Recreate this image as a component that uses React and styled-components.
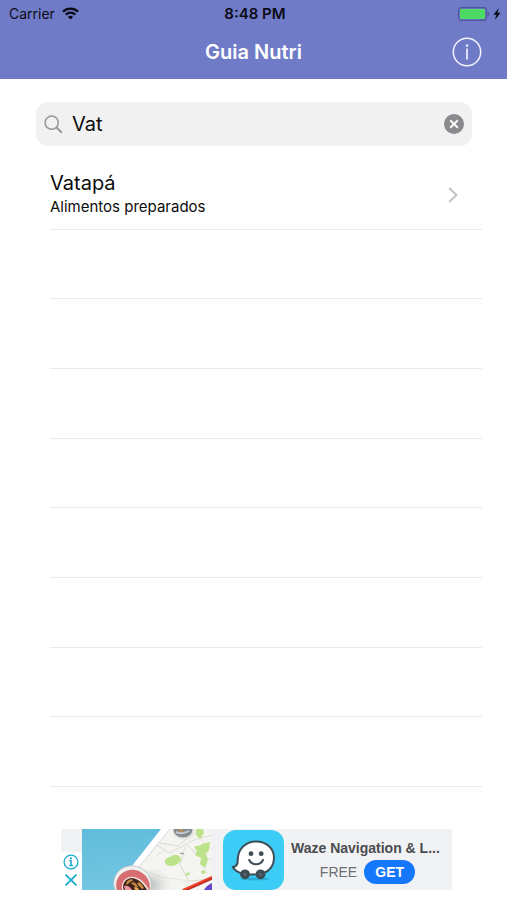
import React, { useState } from 'react';
import styled, { createGlobalStyle, ThemeProvider } from 'styled-components';

const theme = {
  colors: {
    primary: '#707bc8',
    field: '#f1f1f2',
    line: '#ebebec',
    text: '#0c0c0c',
    ad: '#f1f2f4',
    adAction: '#1577fb',
    adChoices: '#16a9c9',
  },
  fonts: {
    system: '"Inter", "Liberation Sans", sans-serif',
    ad: '"Liberation Sans", sans-serif',
  },
};

const GlobalStyle = createGlobalStyle`
  * {
    box-sizing: border-box;
  }

  body {
    margin: 0;
    background: #fff;
    font-family: ${theme.fonts.system};
    color: ${theme.colors.text};
  }

  button {
    padding: 0;
    border: none;
    background: none;
    font-family: inherit;
    cursor: pointer;
  }

  svg {
    display: block;
  }
`;

const Page = styled.div`
  display: flex;
  flex-direction: column;
  min-height: 100vh;
`;

const Header = styled.header`
  background: ${props => props.theme.colors.primary};
`;

const StatusBar = styled.div`
  display: grid;
  grid-template-columns: 1fr auto 1fr;
  align-items: center;
  height: 27px;
  padding: 0 6px 0 9px;
  font-size: 14px;
  line-height: 20px;
  color: #0b0b16;
`;

const StatusGroup = styled.div`
  display: flex;
  align-items: center;
  justify-content: ${props => (props.$end ? 'flex-end' : 'flex-start')};
  gap: ${props => (props.$end ? '3px' : '7px')};
`;

const Clock = styled.time`
  font-size: 15px;
  font-weight: 600;
`;

const NavBar = styled.div`
  display: grid;
  grid-template-columns: 1fr auto 1fr;
  align-items: center;
  height: 52px;
  padding: 0 25px 2px;
`;

const NavTitle = styled.h1`
  grid-column: 2;
  margin: 0;
  font-size: 20px;
  line-height: 24px;
  font-weight: 600;
  color: #fff;
`;

const InfoButton = styled.button`
  justify-self: end;
`;

const SearchForm = styled.form`
  display: flex;
  align-items: center;
  gap: 9px;
  height: 44px;
  margin: 23px 35px 14px 36px;
  padding: 0 8px;
  border-radius: 12px;
  background: ${props => props.theme.colors.field};
`;

const SearchLabel = styled.label`
  flex: none;
`;

const SearchInput = styled.input`
  flex: 1;
  min-width: 0;
  padding: 0;
  border: none;
  outline: none;
  background: transparent;
  font-family: inherit;
  font-size: 20px;
  line-height: 24px;
  color: inherit;
`;

const FoodList = styled.ul`
  display: grid;
  grid-auto-rows: 1fr;
  min-height: 627px;
  margin: 0 25px 0 50px;
  padding: 0;
  list-style: none;
`;

const FoodItem = styled.li`
  border-bottom: 1px solid ${props => props.theme.colors.line};
`;

const FoodButton = styled.button`
  display: flex;
  align-items: center;
  justify-content: space-between;
  width: 100%;
  height: 100%;
  padding: 2px 24px 0 0;
  color: inherit;
  text-align: left;
`;

const FoodText = styled.span`
  display: flex;
  flex-direction: column;
`;

const FoodName = styled.span`
  font-size: 20px;
  line-height: 24px;
`;

const FoodGroup = styled.span`
  font-size: 15px;
  line-height: 24px;
`;

const AdBanner = styled.aside`
  display: flex;
  height: 61px;
  margin: 42px 55px 10px 61px;
  background: ${props => props.theme.colors.ad};
  font-family: ${props => props.theme.fonts.ad};
`;

const AdChoices = styled.div`
  display: flex;
  flex-direction: column;
  flex: none;
  align-items: center;
  justify-content: flex-end;
  gap: 3px;
  width: 21px;
  padding: 0 2px 3px 0;
  border-top: 23px solid ${props => props.theme.colors.ad};
  background: #fff;
`;

const AdPicture = styled.div`
  flex: none;
  margin-right: 11px;
`;

const AdContent = styled.div`
  flex: 1;
  min-width: 0;
  padding: 7px 8px 0 7px;
`;

const AdTitle = styled.div`
  font-size: 14px;
  line-height: 24px;
  font-weight: 700;
  color: #4a4b4e;
  white-space: nowrap;
`;

const AdFooter = styled.div`
  display: flex;
  align-items: center;
  justify-content: center;
  gap: 7px;
`;

const AdPrice = styled.span`
  font-size: 14px;
  line-height: 24px;
  color: #6d6e71;
`;

const AdButton = styled.button`
  width: 51px;
  height: 24px;
  border-radius: 12px;
  background: ${props => props.theme.colors.adAction};
  font-size: 14px;
  line-height: 24px;
  font-weight: 700;
  color: #fff;
`;

const WifiIcon = () => (
  <svg width="17" height="13" viewBox="0 0 17 13" fill="none" stroke="#0b0b16" strokeWidth="2.3" aria-hidden="true">
    <path d="M1 4.6a10.7 10.7 0 0 1 15 0" />
    <path d="M3.8 7.6a6.7 6.7 0 0 1 9.4 0" />
    <path d="M8.5 12.6 5.9 10a3.7 3.7 0 0 1 5.2 0z" fill="#0b0b16" stroke="none" />
  </svg>
);

const BatteryIcon = () => (
  <svg width="32" height="14" viewBox="0 0 32 14" aria-hidden="true">
    <rect x="0.7" y="0.7" width="27.6" height="12.6" rx="2.5" fill="none" stroke="#4c5697" strokeWidth="1.2" />
    <rect x="2" y="2" width="25" height="10" rx="1" fill="#4cd964" />
    <path d="M29.6 4.7c2 .6 2 4 0 4.6z" fill="#4c5697" />
  </svg>
);

const BoltIcon = () => (
  <svg width="8" height="12" viewBox="0 0 8 12" fill="#0b0b16" aria-hidden="true">
    <path d="M5.8 0 0.4 6.7h3L1.8 12l5.8-7.2H4.5z" />
  </svg>
);

const InfoIcon = () => (
  <svg width="30" height="30" viewBox="0 0 30 30" fill="none" stroke="#f2f3ff" aria-hidden="true">
    <circle cx="15" cy="15" r="13.7" strokeWidth="1.5" />
    <path d="M15 11.5v11" strokeWidth="1.7" />
    <circle cx="15" cy="8.5" r="1.2" fill="#f2f3ff" stroke="none" />
  </svg>
);

const SearchIcon = () => (
  <svg width="19" height="19" viewBox="0 0 19 19" fill="none" stroke="#98989c" aria-hidden="true">
    <circle cx="7.7" cy="7.7" r="6.6" strokeWidth="1.5" />
    <path d="m12.3 12.3 5.6 5.4" strokeWidth="2" />
  </svg>
);

const ClearIcon = () => (
  <svg width="20" height="20" viewBox="0 0 20 20" aria-hidden="true">
    <circle cx="10" cy="10" r="10" fill="#8a8a8e" />
    <path d="m6.2 6.2 7.6 7.6m0-7.6-7.6 7.6" stroke="#f8f8f8" strokeWidth="2" />
  </svg>
);

const ChevronIcon = () => (
  <svg width="10" height="16" viewBox="0 0 10 16" fill="none" stroke="#c3c3c8" strokeWidth="2" aria-hidden="true">
    <path d="m1.2 1 7.2 7-7.2 7" />
  </svg>
);

const AdInfoIcon = () => (
  <svg width="16" height="16" viewBox="0 0 16 16" fill="none" stroke={theme.colors.adChoices} aria-hidden="true">
    <circle cx="8" cy="8" r="6.9" strokeWidth="1.3" />
    <path d="M6.5 6.8H8v4.6M6.3 11.6h3.6" strokeWidth="1.5" />
    <circle cx="7.9" cy="4.3" r="1.1" fill={theme.colors.adChoices} stroke="none" />
  </svg>
);

const AdCloseIcon = () => (
  <svg width="16" height="14" viewBox="0 0 16 14" stroke={theme.colors.adChoices} strokeWidth="1.7" aria-hidden="true">
    <path d="m2.6 1.6 10.8 10.8M13.4 1.6 2.6 12.4" />
  </svg>
);

const MapPicture = () => (
  <svg width="130" height="61" viewBox="1 0 130 61" aria-hidden="true">
    <defs>
      <linearGradient id="sky" x1="0" y1="0" x2="0.2" y2="1">
        <stop offset="0" stopColor="#5fbcdb" />
        <stop offset="1" stopColor="#74c6e1" />
      </linearGradient>
      <radialGradient id="shade">
        <stop offset="0" stopColor="#8d9797" stopOpacity="0.6" />
        <stop offset="1" stopColor="#c8cccb" stopOpacity="0" />
      </radialGradient>
    </defs>
    <rect width="131" height="61" fill="url(#sky)" />
    <path d="M80 0h51v61H45l-2-14z" fill="#fff" />
    <path d="M90 0h41v61H48l6-19z" fill="#f4f4f0" />
    <path d="M89 0 54 43" stroke="#d3d7da" strokeWidth="1" />
    <g fill="none" stroke="#dedbd5" strokeWidth="1">
      <path d="m76 16 12 8 14-7 11-6 18-5M79 14l18 3 13-11M106 16l12 11 13 4M104 18l-5 18 9 16 23-2" />
      <path d="m74 28 10-7M64 42l16 6 28 4-6 9M117 8l14 12" stroke="#eae2da" />
    </g>
    <g fill="#bce28a">
      <path d="M84 31c2-3 5-2 8-5 4-1 7 1 8 4-1 4-5 7-10 7-4 0-7-3-6-6z" />
      <path d="M113 18c3-2 5 0 8-3l8-2-1 8-3 4 2 6-3 8-5-4 1-6-6-3 2-4z" />
      <path d="M115 0h7l1 4-4 6-4-4zM104 45l4-2 1 2-4 2zM120 42l4-1 1 3-4 1z" />
    </g>
    <path d="m99 24 4 1" stroke="#8e8e8b" strokeWidth="1.2" />
    <ellipse cx="103" cy="4" rx="13" ry="8" fill="url(#shade)" />
    <ellipse cx="102" cy="1" rx="10" ry="8" fill="#858b8e" stroke="#dfe3e4" strokeWidth="1.2" />
    <path d="M95 3q6 3 13-1" fill="none" stroke="#c4c9cc" strokeWidth="2" />
    <path d="m98 1 4 1" stroke="#ce8a46" strokeWidth="2" />
    <ellipse cx="69" cy="56" rx="22" ry="18" fill="url(#shade)" />
    <path d="m102 62 29-13" stroke="#bb2c24" strokeWidth="3" />
    <path d="m102 61 29-13" stroke="#ee422b" strokeWidth="2" />
    <path d="M123 61q3-5 8-7v7z" fill="#6944cd" />
    <ellipse cx="51.5" cy="55" rx="19" ry="18" transform="rotate(25 51.5 55)" fill="#eef0ef" stroke="#b9c0c1" strokeWidth="0.8" />
    <ellipse cx="52" cy="57" rx="17" ry="16" transform="rotate(25 52 57)" fill="#d76d70" />
    <path d="M41 61c-1-7 2-12 8-13 8-1 14 4 19 13z" fill="#f5dfd4" />
    <path d="M42 59c0-6 3-9 8-10 7 0 12 5 16 12H43z" fill="#40231b" />
    <path d="M45 54c2-3 4-4 6-4l1 2c-2 0-4 2-6 4zM52 53c2 0 4 3 5 5l-2 1c-1-2-3-4-5-4zM58 53c3 2 4 4 5 6l-2 1-5-5z" fill="#c38a43" />
    <path d="M43 57c3-1 6 0 8 4h-7z" fill="#ee929f" />
    <path d="m53 58 4 1 1 2h-4z" fill="#eca94b" />
  </svg>
);

const WazeIcon = () => (
  <svg width="61" height="61" viewBox="0 0 61 61" role="img" aria-label="Waze">
    <rect width="61" height="60" rx="13" y="1" fill="#3ccdf7" />
    <ellipse cx="32" cy="50" rx="15" ry="1.5" fill="#28aed6" />
    <path
      d="M21.5 45C16.5 44.3 11.8 41.5 9.7 38c3.8-.3 5-2.5 5-6.3C14.4 20.5 22.2 12.4 33 12.4c10.3 0 18 7 18 16.5 0 7.2-4.2 12.8-11.2 15.5-5.5 1.6-12 1.3-18.3.6z"
      fill="#fff"
      stroke="#3e4d55"
      strokeWidth="2"
      strokeLinejoin="round"
    />
    <g fill="#3e4d55">
      <circle cx="28" cy="24.7" r="2.4" />
      <circle cx="38.2" cy="24.7" r="2.4" />
      <circle cx="22" cy="45.3" r="4.9" />
      <circle cx="37.5" cy="45.3" r="4.9" />
    </g>
    <g fill="#55656d">
      <circle cx="22" cy="45.3" r="1.6" />
      <circle cx="37.5" cy="45.3" r="1.6" />
    </g>
    <path d="M26.2 31c2.6 5.6 11.2 5.6 13.8 0" fill="none" stroke="#3e4d55" strokeWidth="2" strokeLinecap="round" />
  </svg>
);

const foods = [{ id: 1, name: 'Vatapá', group: 'Alimentos preparados' }];
const VISIBLE_ROWS = 9;

const App = () => {
  const [query, setQuery] = useState('Vat');

  const results = foods.filter(food => food.name.toLowerCase().includes(query.toLowerCase()));
  const emptyRows = Array.from({ length: Math.max(0, VISIBLE_ROWS - results.length) });

  return (
    <ThemeProvider theme={theme}>
      <GlobalStyle />
      <Page>
        <Header>
          <StatusBar>
            <StatusGroup>
              <span>Carrier</span>
              <WifiIcon />
            </StatusGroup>
            <Clock>8:48 PM</Clock>
            <StatusGroup $end>
              <BatteryIcon />
              <BoltIcon />
            </StatusGroup>
          </StatusBar>
          <NavBar>
            <NavTitle>Guia Nutri</NavTitle>
            <InfoButton type="button" aria-label="Info">
              <InfoIcon />
            </InfoButton>
          </NavBar>
        </Header>

        <main>
          <SearchForm role="search" onSubmit={e => e.preventDefault()}>
            <SearchLabel htmlFor="food-search" aria-label="Buscar alimento">
              <SearchIcon />
            </SearchLabel>
            <SearchInput id="food-search" type="text" value={query} onChange={e => setQuery(e.target.value)} />
            <button type="button" aria-label="Limpar" onClick={() => setQuery('')}>
              <ClearIcon />
            </button>
          </SearchForm>

          <FoodList>
            {results.map(food => (
              <FoodItem key={food.id}>
                <FoodButton type="button">
                  <FoodText>
                    <FoodName>{food.name}</FoodName>
                    <FoodGroup>{food.group}</FoodGroup>
                  </FoodText>
                  <ChevronIcon />
                </FoodButton>
              </FoodItem>
            ))}
            {emptyRows.map((_, index) => (
              <FoodItem key={`empty-${index}`} aria-hidden="true" />
            ))}
          </FoodList>
        </main>

        <AdBanner>
          <AdChoices>
            <button type="button" aria-label="AdChoices">
              <AdInfoIcon />
            </button>
            <button type="button" aria-label="Fechar">
              <AdCloseIcon />
            </button>
          </AdChoices>
          <AdPicture>
            <MapPicture />
          </AdPicture>
          <WazeIcon />
          <AdContent>
            <AdTitle>Waze Navigation &amp; L...</AdTitle>
            <AdFooter>
              <AdPrice>FREE</AdPrice>
              <AdButton type="button">GET</AdButton>
            </AdFooter>
          </AdContent>
        </AdBanner>
      </Page>
    </ThemeProvider>
  );
};

export default App;
